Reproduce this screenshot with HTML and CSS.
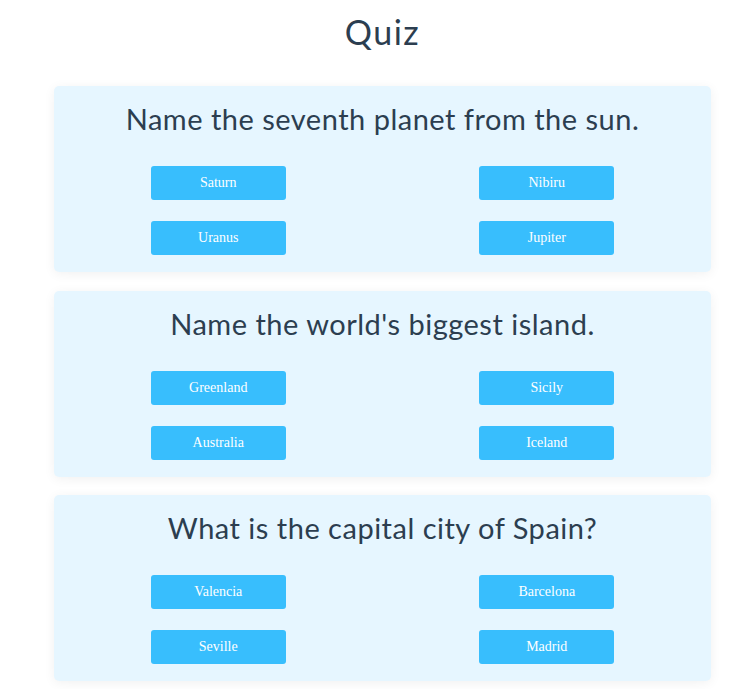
FILE: index.html
```html
<!DOCTYPE html>
<html>
<head>
<meta charset="utf-8">
<link rel="stylesheet" href="styles.css">
</head>
<body>
<div class="app">
  <h1 class="title">Quiz</h1>
  <div class="card">
    <h2 class="question">Name the seventh planet from the sun.</h2>
    <div class="answers">
      <button class="answer">Saturn</button>
      <button class="answer">Nibiru</button>
      <button class="answer">Uranus</button>
      <button class="answer">Jupiter</button>
    </div>
  </div>
  <div class="card">
    <h2 class="question">Name the world's biggest island.</h2>
    <div class="answers">
      <button class="answer">Greenland</button>
      <button class="answer">Sicily</button>
      <button class="answer">Australia</button>
      <button class="answer">Iceland</button>
    </div>
  </div>
  <div class="card">
    <h2 class="question">What is the capital city of Spain?</h2>
    <div class="answers">
      <button class="answer">Valencia</button>
      <button class="answer">Barcelona</button>
      <button class="answer">Seville</button>
      <button class="answer">Madrid</button>
    </div>
  </div>
</div>
</body>
</html>
```
FILE: styles.css
```css
html, body {
  margin: 0;
  padding: 0;
  background: #ffffff;
}
.app {
  width: 657px;
  margin-left: 54px;
  font-family: Lato, "Noto Sans", Arial, sans-serif;
  color: #2c3e50;
  padding-top: 12px;
}
.title {
  margin: 0 0 34px 0;
  font-size: 34px;
  font-weight: 400;
  letter-spacing: 1.5px;
  line-height: 40px;
  text-align: center;
}
.card {
  background: #e6f6ff;
  border-radius: 5px;
  box-shadow: 0 2px 12px rgba(0, 0, 0, 0.06);
  padding: 16px 0 17px 0;
  margin-bottom: 18.5px;
}
.question {
  margin: 0 0 30px 0;
  font-size: 29px;
  font-weight: 400;
  letter-spacing: 0.5px;
  line-height: 34px;
  text-align: center;
}
.answers {
  display: grid;
  grid-template-columns: 1fr 1fr;
  row-gap: 21px;
  justify-items: center;
}
.answer {
  width: 135px;
  height: 34px;
  border: none;
  border-radius: 3px;
  background: #38befd;
  color: #ffffff;
  font-family: "Liberation Serif", "Times New Roman", serif;
  font-size: 14px;
  padding: 0;
}
```
